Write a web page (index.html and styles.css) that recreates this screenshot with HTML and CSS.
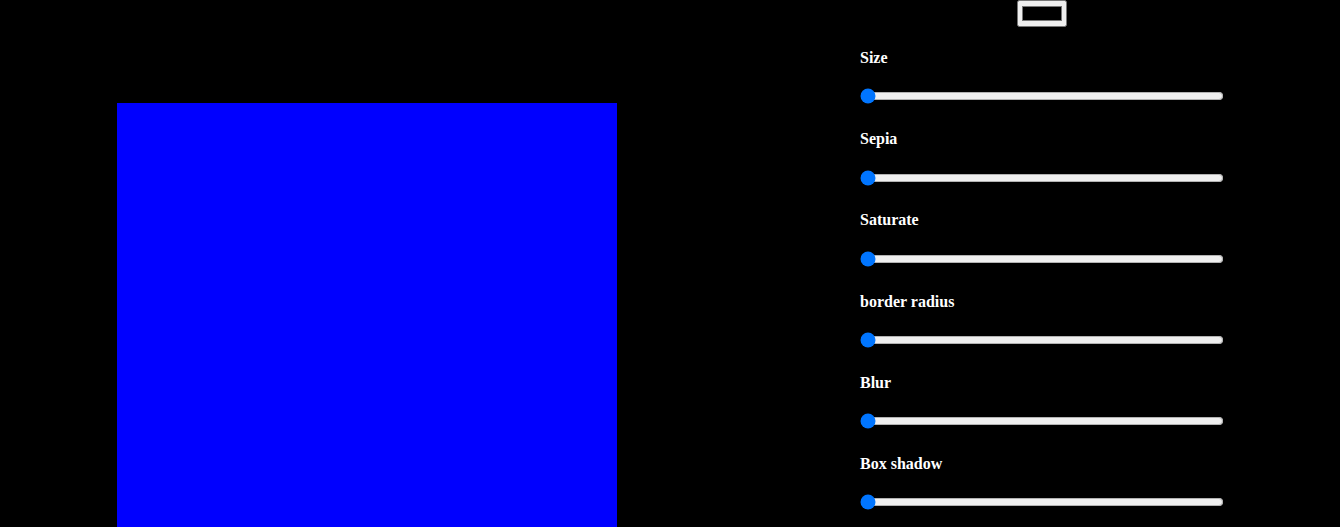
FILE: index.html
```html
<!DOCTYPE html>
<html>
<head>
<meta charset="utf-8">
<link rel="stylesheet" href="styles.css">
</head>
<body>
<div class="page">
  <div class="preview">
    <div class="box"></div>
  </div>
  <div class="controls">
    <input class="color" type="color" value="#000000">
    <div class="group">
      <label class="label">Size</label>
      <input class="slider" type="range" min="0" max="100" value="0">
    </div>
    <div class="group">
      <label class="label">Sepia</label>
      <input class="slider" type="range" min="0" max="100" value="0">
    </div>
    <div class="group">
      <label class="label">Saturate</label>
      <input class="slider" type="range" min="0" max="100" value="0">
    </div>
    <div class="group">
      <label class="label">border radius</label>
      <input class="slider" type="range" min="0" max="100" value="0">
    </div>
    <div class="group">
      <label class="label">Blur</label>
      <input class="slider" type="range" min="0" max="100" value="0">
    </div>
    <div class="group">
      <label class="label">Box shadow</label>
      <input class="slider" type="range" min="0" max="100" value="0">
    </div>
  </div>
</div>
</body>
</html>
```

FILE: styles.css
```css
html, body {
  margin: 0;
  padding: 0;
  background: #000;
  overflow: hidden;
  height: 527px;
}
body {
  font-family: "Liberation Serif", "Times New Roman", serif;
  color: #fff;
}
.page {
  display: flex;
  align-items: flex-start;
}
.preview {
  padding-left: 117px;
  padding-top: 103px;
}
.box {
  width: 500px;
  height: 500px;
  background: #0000ff;
}
.controls {
  margin-left: 243px;
  width: 364px;
  display: flex;
  flex-direction: column;
}
.color {
  align-self: center;
  width: 50px;
  height: 27px;
  margin: 0 0 22px 0;
}
.group {
  display: flex;
  flex-direction: column;
  align-items: flex-start;
  height: 81.2px;
  flex-shrink: 0;
}
.label {
  display: block;
  font-weight: bold;
  font-size: 16px;
  line-height: 18px;
  height: 18px;
}
.slider {
  margin: 21.4px 0 0 0;
  width: 364px;
  height: 16px;
}
```
